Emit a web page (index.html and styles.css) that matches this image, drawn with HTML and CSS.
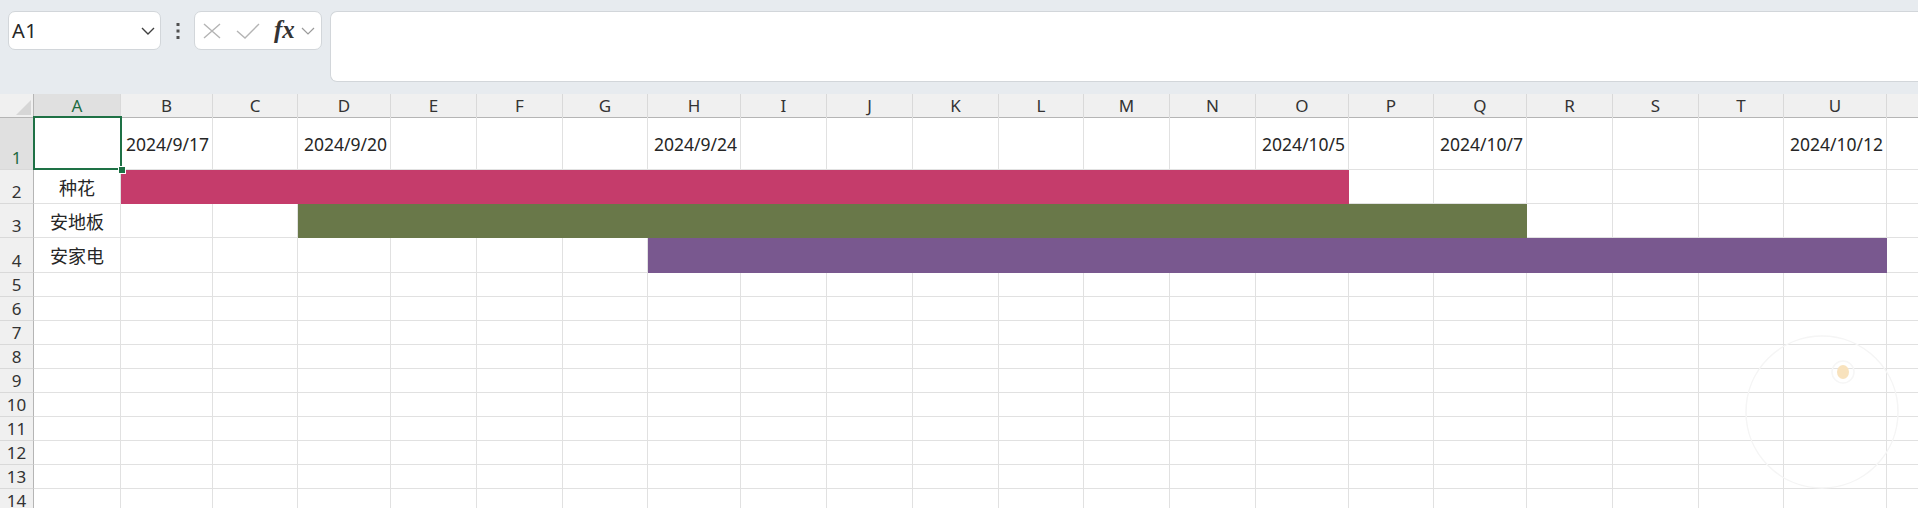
FILE: index.html
```html
<!DOCTYPE html>
<html lang="zh-CN">
<head>
    <meta charset="UTF-8">
    <meta name="viewport" content="width=device-width, initial-scale=1.0">
    <title>甘特图 - 工作簿</title>

    <!-- CSS Styling -->
    <link rel="stylesheet" href="styles.css">
</head>
<body>

    <!-- Formula Bar -->
    <div class="formula-bar">
        <div class="name-box">
            <span>A1</span>
            <svg class="chevron" width="14" height="8" viewBox="0 0 14 8"><polyline points="1,1 7,7 13,1" fill="none" stroke="#404040" stroke-width="1.4"/></svg>
        </div>
        <div class="more-dots">
            <svg width="4" height="16" viewBox="0 0 4 16"><rect x="0.5" y="0" width="3" height="3" fill="#505050"/><rect x="0.5" y="6.5" width="3" height="3" fill="#505050"/><rect x="0.5" y="13" width="3" height="3" fill="#505050"/></svg>
        </div>
        <div class="fx-group">
            <svg class="icon-cancel" width="18" height="16" viewBox="0 0 18 16"><path d="M1 1 L17 15 M17 1 L1 15" stroke="#b4b4b4" stroke-width="1.4" fill="none"/></svg>
            <svg class="icon-enter" width="24" height="16" viewBox="0 0 24 16"><polyline points="1,8 9,15 23,1" fill="none" stroke="#b4b4b4" stroke-width="1.4"/></svg>
            <span class="fx">fx</span>
            <svg class="icon-expand" width="14" height="8" viewBox="0 0 14 8"><polyline points="1,1 7,7 13,1" fill="none" stroke="#9a9a9a" stroke-width="1.2"/></svg>
        </div>
        <div class="formula-input"></div>
    </div>

    <!-- Sheet Grid -->
    <div class="sheet" id="sheet">
        <div class="row head-row">
            <div class="corner"><span class="corner-tri"></span></div>
            <div class="col-head active">A</div>
            <div class="col-head">B</div>
            <div class="col-head">C</div>
            <div class="col-head">D</div>
            <div class="col-head">E</div>
            <div class="col-head">F</div>
            <div class="col-head">G</div>
            <div class="col-head">H</div>
            <div class="col-head">I</div>
            <div class="col-head">J</div>
            <div class="col-head">K</div>
            <div class="col-head">L</div>
            <div class="col-head">M</div>
            <div class="col-head">N</div>
            <div class="col-head">O</div>
            <div class="col-head">P</div>
            <div class="col-head">Q</div>
            <div class="col-head">R</div>
            <div class="col-head">S</div>
            <div class="col-head">T</div>
            <div class="col-head">U</div>
            <div class="col-head"></div>
        </div>

        <div class="row r1">
            <div class="row-head active">1</div>
            <div class="cell selected"><div class="sel-box"><span class="handle"></span></div></div>
            <div class="cell date">2024/9/17</div>
            <div class="cell"></div>
            <div class="cell date">2024/9/20</div>
            <div class="cell"></div>
            <div class="cell"></div>
            <div class="cell"></div>
            <div class="cell date">2024/9/24</div>
            <div class="cell"></div>
            <div class="cell"></div>
            <div class="cell"></div>
            <div class="cell"></div>
            <div class="cell"></div>
            <div class="cell"></div>
            <div class="cell date">2024/10/5</div>
            <div class="cell"></div>
            <div class="cell date">2024/10/7</div>
            <div class="cell"></div>
            <div class="cell"></div>
            <div class="cell"></div>
            <div class="cell date">2024/10/12</div>
            <div class="cell"></div>
        </div>

        <div class="row r2">
            <div class="row-head">2</div>
            <div class="cell task">种花</div>
            <div class="bar bar-pink"></div>
            <div class="cell"></div>
            <div class="cell"></div>
            <div class="cell"></div>
            <div class="cell"></div>
            <div class="cell"></div>
            <div class="cell"></div>
            <div class="cell"></div>
        </div>

        <div class="row r3">
            <div class="row-head">3</div>
            <div class="cell task">安地板</div>
            <div class="cell"></div>
            <div class="cell"></div>
            <div class="bar bar-green"></div>
            <div class="cell"></div>
            <div class="cell"></div>
            <div class="cell"></div>
            <div class="cell"></div>
            <div class="cell"></div>
        </div>

        <div class="row r4">
            <div class="row-head">4</div>
            <div class="cell task">安家电</div>
            <div class="cell"></div>
            <div class="cell"></div>
            <div class="cell"></div>
            <div class="cell"></div>
            <div class="cell"></div>
            <div class="cell"></div>
            <div class="bar bar-purple"></div>
            <div class="cell"></div>
        </div>

        <!-- faint watermark in the corner -->
        <svg class="watermark" width="165" height="165" viewBox="0 0 165 165">
            <circle cx="82" cy="82" r="76" fill="none" stroke="#f5f5f5" stroke-width="1.5"/>
            <circle cx="103" cy="42" r="11" fill="none" stroke="#f6f6f6" stroke-width="1.5"/>
            <ellipse cx="103" cy="42" rx="6" ry="7" fill="#f8e2bd"/>
        </svg>
    </div>

    <!-- empty rows 5 - 14 -->
    <script>
        const sheet = document.getElementById('sheet');
        for (let r = 5; r <= 14; r++) {
            const row = document.createElement('div');
            row.className = 'row';
            row.innerHTML = '<div class="row-head">' + r + '</div>' + '<div class="cell"></div>'.repeat(22);
            sheet.appendChild(row);
        }
    </script>

</body>
</html>
```

FILE: styles.css
```css
* {
    box-sizing: border-box;
}

body {
    margin: 0;
    width: 1918px;
    height: 508px;
    overflow: hidden;
    background-color: #fff;
    font-family: "Noto Sans", "Noto Sans CJK SC", sans-serif;
    color: #262626;
}

/* formula bar */
.formula-bar {
    display: flex;
    align-items: flex-start;
    height: 94px;
    padding: 11px 0 0 8px;
    background-color: #e7ebef;
}

.name-box {
    display: flex;
    align-items: center;
    justify-content: space-between;
    width: 153px;
    height: 39px;
    padding: 0 5px 0 3px;
    background-color: #fff;
    border: 1px solid #d2d6da;
    border-radius: 7px;
    font-size: 20px;
    letter-spacing: 0.5px;
}

.more-dots {
    display: flex;
    align-items: center;
    justify-content: center;
    width: 33px;
    height: 39px;
}

.fx-group {
    display: flex;
    align-items: center;
    width: 128px;
    height: 39px;
    padding-left: 8px;
    background-color: #fff;
    border: 1px solid #d2d6da;
    border-radius: 7px;
}

.icon-enter {
    margin-left: 15px;
}

.fx {
    margin-left: 14px;
    margin-top: -3px;
    font-family: "Liberation Serif", serif;
    font-style: italic;
    font-weight: bold;
    font-size: 25px;
    line-height: 1;
    color: #333;
}

.icon-expand {
    margin-left: 6px;
}

.formula-input {
    flex: 1;
    height: 71px;
    margin-left: 8px;
    background-color: #fff;
    border: 1px solid #d2d6da;
    border-right: none;
    border-radius: 7px 0 0 7px;
}

/* sheet */
.sheet {
    position: relative;
}

.row {
    display: grid;
    grid-template-columns: 34px 87px 92px 85px 93px 86px 86px 85px 93px 86px 86px 86px 85px 86px 86px 93px 85px 93px 86px 86px 85px 103px 110px;
    height: 24px;
}

.head-row { height: 23px; }
.r1 { height: 53px; }
.r2, .r3 { height: 34px; }
.r4 { height: 35px; }

.corner {
    position: relative;
    background-color: #f0f0f0;
    border-right: 1px solid #b5b5b5;
    border-bottom: 1px solid #b5b5b5;
}

.corner-tri {
    position: absolute;
    right: 2px;
    bottom: 2px;
    width: 0;
    height: 0;
    border-left: 15px solid transparent;
    border-bottom: 15px solid #d6d6d6;
}

.col-head {
    display: flex;
    align-items: center;
    justify-content: center;
    background-color: #f0f0f0;
    border-right: 1px solid #d9d9d9;
    border-bottom: 1px solid #b5b5b5;
    font-size: 17px;
    color: #333;
}

.row-head {
    display: flex;
    align-items: flex-end;
    justify-content: center;
    padding-bottom: 1px;
    line-height: 20px;
    background-color: #f0f0f0;
    border-right: 1px solid #b5b5b5;
    border-bottom: 1px solid #d9d9d9;
    font-size: 17px;
    color: #333;
}

.col-head.active,
.row-head.active {
    background-color: #e0e0e0;
    color: #1e6b40;
}

.cell {
    display: flex;
    align-items: center;
    border-right: 1px solid #e1e1e1;
    border-bottom: 1px solid #e1e1e1;
    font-size: 17.5px;
    white-space: nowrap;
}

.cell.date {
    justify-content: flex-end;
    padding-right: 3px;
    padding-top: 1px;
}

.cell.task {
    justify-content: center;
    font-size: 18px;
}

.cell.selected {
    position: relative;
}

.sel-box {
    position: absolute;
    top: -1px;
    left: -1px;
    right: -2px;
    bottom: -1px;
    border: 2px solid #1e7145;
    z-index: 3;
}

.handle {
    position: absolute;
    right: -6px;
    bottom: -6px;
    width: 8px;
    height: 8px;
    background-color: #1e7145;
    border: 1px solid #fff;
}

/* gantt bars */
.bar-pink {
    grid-column: 3 / 17;
    background-color: #c53c6b;
}

.bar-green {
    grid-column: 5 / 19;
    background-color: #697849;
}

.bar-purple {
    grid-column: 9 / 23;
    background-color: #79588f;
}

.watermark {
    position: absolute;
    left: 1740px;
    top: 236px;
    z-index: 2;
}
```
